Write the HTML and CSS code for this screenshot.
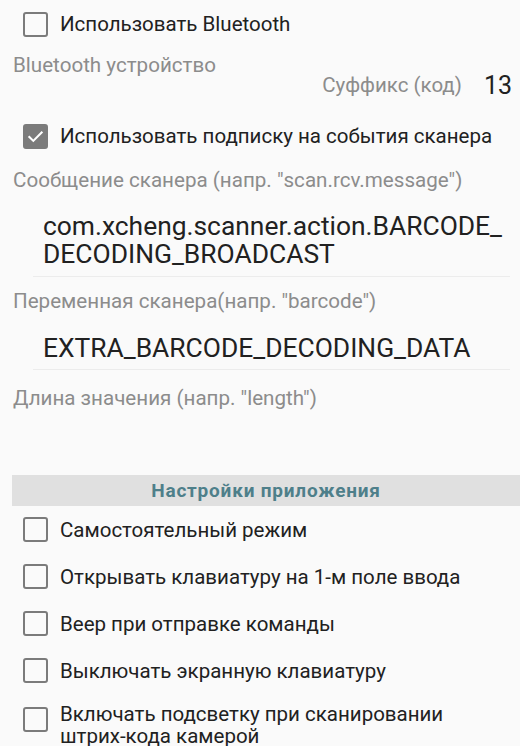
FILE: index.html
```html
<!DOCTYPE html>
<html lang="ru">
<head>
  <meta charset="UTF-8">
  <title>Настройки</title>
  <link rel="stylesheet" href="styles.css">
</head>
<body>
  <div class="screen">
    <!-- Bluetooth -->
    <label class="opt">
      <span class="box"></span>
      <span class="opt-text">Использовать Bluetooth</span>
    </label>
    <div class="hint hint-bt">Bluetooth устройство</div>
    <div class="suffix-row">
      <span class="suffix-label">Суффикс (код)</span>
      <span class="suffix-value">13</span>
    </div>

    <!-- Scanner broadcast -->
    <label class="opt">
      <span class="box checked">
        <svg viewBox="0 0 24 24" width="21" height="21"><path d="M5 12.5l4.5 4.5L19 7.5" fill="none" stroke="#fff" stroke-width="2.4" stroke-linecap="square"/></svg>
      </span>
      <span class="opt-text">Использовать подписку на события сканера</span>
    </label>
    <div class="hint hint-msg">Сообщение сканера (напр. "scan.rcv.message")</div>
    <div class="field field-msg">com.xcheng.scanner.action.BARCODE_<br>DECODING_BROADCAST</div>

    <div class="hint hint-var">Переменная сканера(напр. "barcode")</div>
    <div class="field field-var">EXTRA_BARCODE_DECODING_DATA</div>

    <div class="hint hint-len">Длина значения (напр. "length")</div>

    <!-- App settings -->
    <div class="section">Настройки приложения</div>

    <label class="opt opt-app">
      <span class="box"></span>
      <span class="opt-text">Самостоятельный режим</span>
    </label>
    <label class="opt opt-app">
      <span class="box"></span>
      <span class="opt-text">Открывать клавиатуру на 1-м поле ввода</span>
    </label>
    <label class="opt opt-app">
      <span class="box"></span>
      <span class="opt-text">Веер при отправке команды</span>
    </label>
    <label class="opt opt-app">
      <span class="box"></span>
      <span class="opt-text">Выключать экранную клавиатуру</span>
    </label>
    <label class="opt opt-app opt-multi">
      <span class="box"></span>
      <span class="opt-text">Включать подсветку при сканировании<br>штрих-кода камерой</span>
    </label>
  </div>
</body>
</html>
```

FILE: styles.css
```css
body {
  margin: 0;
  padding: 0;
  background-color: #fafafa;
  font-family: Roboto, "Noto Sans", sans-serif;
  color: #212121;
}

.screen {
  width: 520px;
  height: 746px;
  overflow: hidden;
}

/* checkbox rows */
.opt {
  display: flex;
  align-items: center;
  height: 48px;
  padding-left: 23px;
}

.opt-app {
  height: 47px;
}

.opt-multi {
  align-items: flex-start;
  height: auto;
}

.opt-multi .box {
  margin-top: 13px;
}

.opt-multi .opt-text {
  margin-top: 9px;
  line-height: 22px;
}

.box {
  box-sizing: border-box;
  width: 25px;
  height: 25px;
  border: 2px solid #7b7b7b;
  border-radius: 3px;
  flex-shrink: 0;
  display: flex;
  align-items: center;
  justify-content: center;
}

.box.checked {
  background-color: #7b7b7b;
}

.opt-text {
  margin-left: 12px;
  font-size: 20.5px;
}

/* grey hints */
.hint {
  padding-left: 13px;
  font-size: 20.6px;
  color: #8c8c8c;
  line-height: 24px;
}

.hint-bt {
  margin-top: 5px;
}

.hint-msg {
  margin-top: 8px;
}

.hint-var {
  margin-top: 12px;
}

.hint-len {
  margin-top: 16px;
}

.suffix-row {
  display: flex;
  justify-content: flex-end;
  align-items: center;
  height: 24px;
  margin: -4px 0 15px;
  padding-right: 8px;
}

.suffix-label {
  font-size: 20.5px;
  color: #8c8c8c;
}

.suffix-value {
  margin-left: 22px;
  font-size: 25px;
}

/* edit texts */
.field {
  margin: 0 10px 0 33px;
  padding: 0 0 8px 10px;
  border-bottom: 1px solid #ececec;
  font-size: 26.4px;
  line-height: 28px;
}

.field-msg {
  margin-top: 20px;
}

.field-var {
  margin-top: 21px;
  padding-bottom: 7px;
}

/* section header */
.section {
  margin: 65px 0 0 12px;
  height: 31px;
  line-height: 31px;
  background-color: #e0e0e0;
  text-align: center;
  font-size: 19px;
  font-weight: bold;
  letter-spacing: 0.8px;
  color: #4e7f8a;
}
```
